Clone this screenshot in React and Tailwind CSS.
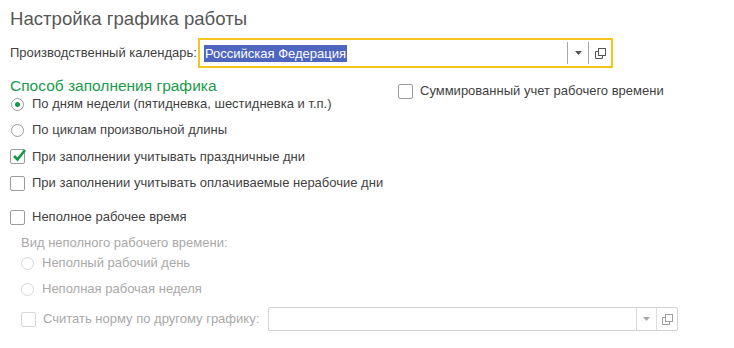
const FONT = { fontFamily: '"Liberation Sans", Arial, sans-serif' };

function Radio({ checked = false, disabled = false }) {
  return (
    <span
      className={`flex h-[13px] w-[13px] shrink-0 items-center justify-center rounded-full border bg-white ${
        disabled ? "border-[#d6d6d6]" : "border-[#9c9c9c]"
      }`}
    >
      {checked && <span className="h-[5px] w-[5px] rounded-full bg-[#14994a]" />}
    </span>
  );
}

function Checkbox({ checked = false, disabled = false }) {
  return (
    <span
      className={`relative flex h-[15px] w-[15px] shrink-0 items-center justify-center rounded-[2px] border bg-white ${
        disabled ? "border-[#d6d6d6]" : "border-[#9c9c9c]"
      }`}
    >
      {checked && (
        <svg width="15" height="14" viewBox="0 0 15 14" className="absolute -top-[2px] left-[1px]">
          <path d="M2 8 L5.5 11.5 L13 2" fill="none" stroke="#14994a" strokeWidth="2.6" />
        </svg>
      )}
    </span>
  );
}

function DropArrow({ color }) {
  return (
    <svg width="7" height="4" viewBox="0 0 7 4">
      <path d="M0 0 H7 L3.5 4 Z" fill={color} />
    </svg>
  );
}

function OpenIcon({ color }) {
  return (
    <svg width="11" height="11" viewBox="0 0 11 11">
      <rect x="3.5" y="0.5" width="7" height="7" fill="none" stroke={color} />
      <path d="M3.5 3.5 H0.5 V10.5 H7.5 V7.5" fill="none" stroke={color} />
    </svg>
  );
}

function Row({ children, className = "" }) {
  return <div className={`flex items-center gap-[7px] ${className}`}>{children}</div>;
}

export default function App() {
  return (
    <div className="min-h-[348px] w-[734px] bg-white px-[10px] pt-[6px] text-[13px] text-[#3f3f3f]" style={FONT}>
      <h1 className="h-[26px] text-[18.6px] leading-[26px] text-[#575757]">Настройка графика работы</h1>

      <div className="mt-[6px] flex h-[30px] items-center">
        <span className="w-[188px] shrink-0">Производственный календарь:</span>
        <div className="flex h-[30px] w-[415px] items-stretch border-2 border-[#f4c51c] bg-white">
          <div className="flex flex-1 items-center pl-[4px]">
            <span className="bg-[#4e66bf] px-[1px] leading-[17px] text-white">Российская Федерация</span>
          </div>
          <div className="my-[2px] w-px bg-[#a6a6a6]" />
          <div className="flex w-[20px] items-center justify-center">
            <DropArrow color="#555555" />
          </div>
          <div className="my-[2px] w-px bg-[#a6a6a6]" />
          <div className="flex w-[22px] items-center justify-center">
            <OpenIcon color="#555555" />
          </div>
        </div>
      </div>

      <div className="flex">
        <div className="w-[388px] shrink-0">
          <div className="mt-[9px] h-[18px] text-[15.5px] leading-[18px] text-[#1a9a4b]">Способ заполнения графика</div>
          <Row className="h-[18px] pl-[1px]">
            <Radio checked />
            <span className="ml-[1px]">По дням недели (пятидневка, шестидневка и т.п.)</span>
          </Row>
          <Row className="mt-[4px] h-[26px] pl-[1px]">
            <Radio />
            <span className="ml-[1px]">По циклам произвольной длины</span>
          </Row>
          <Row className="h-[27px]">
            <Checkbox checked />
            <span>При заполнении учитывать праздничные дни</span>
          </Row>
          <Row className="h-[26px]">
            <Checkbox />
            <span>При заполнении учитывать оплачиваемые нерабочие дни</span>
          </Row>
        </div>
        <div className="pt-[10px]">
          <Row className="h-[26px]">
            <Checkbox />
            <span>Суммированный учет рабочего времени</span>
          </Row>
        </div>
      </div>

      <Row className="mt-[8px] h-[26px]">
        <Checkbox />
        <span>Неполное рабочее время</span>
      </Row>

      <div className="pl-[11px] text-[#a9a9a9]">
        <div className="mt-[3px] h-[20px] leading-[20px]">Вид неполного рабочего времени:</div>
        <Row className="h-[20px]">
          <Radio disabled />
          <span className="ml-[1px]">Неполный рабочий день</span>
        </Row>
        <Row className="mt-[3px] h-[26px]">
          <Radio disabled />
          <span className="ml-[1px]">Неполная рабочая неделя</span>
        </Row>
        <div className="mt-[5px] flex h-[24px] items-center">
          <Checkbox disabled />
          <span className="ml-[7px] w-[225px]">Считать норму по другому графику:</span>
          <div className="flex h-[24px] w-[410px] items-stretch rounded-[2px] border border-[#d3d3d3] bg-white">
            <div className="flex-1" />
            <div className="w-px bg-[#dcdcdc]" />
            <div className="flex w-[19px] items-center justify-center">
              <DropArrow color="#a9a9a9" />
            </div>
            <div className="w-px bg-[#dcdcdc]" />
            <div className="flex w-[20px] items-center justify-center">
              <OpenIcon color="#9c9c9c" />
            </div>
          </div>
        </div>
      </div>
    </div>
  );
}
